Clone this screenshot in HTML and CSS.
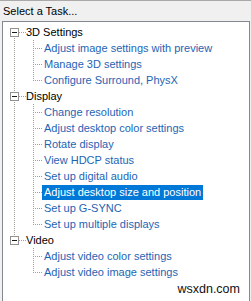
FILE: index.html
```html
<!DOCTYPE html>
<html lang="en">
<head>
    <meta charset="UTF-8">
    <title>Select a Task</title>
    <link rel="stylesheet" href="styles.css">
</head>
<body>
    <div class="title">Select a Task...</div>
    <div class="panel">
        <ul class="tree">
            <li class="root">
                <div class="row"><span class="toggle"></span><span class="label">3D Settings</span></div>
                <ul class="children">
                    <li class="child"><span class="label link">Adjust image settings with preview</span></li>
                    <li class="child"><span class="label link">Manage 3D settings</span></li>
                    <li class="child"><span class="label link">Configure Surround, PhysX</span></li>
                </ul>
            </li>
            <li class="root">
                <div class="row"><span class="toggle"></span><span class="label">Display</span></div>
                <ul class="children">
                    <li class="child"><span class="label link">Change resolution</span></li>
                    <li class="child"><span class="label link">Adjust desktop color settings</span></li>
                    <li class="child"><span class="label link">Rotate display</span></li>
                    <li class="child"><span class="label link">View HDCP status</span></li>
                    <li class="child"><span class="label link">Set up digital audio</span></li>
                    <li class="child"><span class="label link selected">Adjust desktop size and position</span></li>
                    <li class="child"><span class="label link">Set up G-SYNC</span></li>
                    <li class="child"><span class="label link">Set up multiple displays</span></li>
                </ul>
            </li>
            <li class="root">
                <div class="row"><span class="toggle"></span><span class="label">Video</span></div>
                <ul class="children">
                    <li class="child"><span class="label link">Adjust video color settings</span></li>
                    <li class="child"><span class="label link">Adjust video image settings</span></li>
                </ul>
            </li>
        </ul>
        <div class="mark">wsxdn.com</div>
    </div>
</body>
</html>
```

FILE: styles.css
```css
body {
    margin: 0;
    background-color: #f0f0f0;
    border-top: 1px solid #a9a9a9;
    font-family: "Liberation Sans", Arial, sans-serif;
    font-size: 11px;
    color: #000;
    overflow: hidden;
}

.title {
    height: 20px;
    line-height: 20px;
    padding-left: 3px;
}

.panel {
    margin-left: 2px;
    width: 246px;
    height: 290px;
    border: 1px solid #828790;
    background-color: #fff;
}

.tree,
.children {
    list-style: none;
    margin: 0;
    padding: 0;
}

.tree {
    padding-top: 2px;
}

/* dotted connector lines */
.root {
    background: repeating-linear-gradient(to bottom, #a0a0a0 0 1px, transparent 1px 2px) 11px 0 / 1px 100% no-repeat;
}

.root:first-child {
    background-position: 11px 8px;
}

.root:last-child {
    background-size: 1px 8px;
}

.row {
    height: 16px;
    display: flex;
    align-items: center;
    background: repeating-linear-gradient(to right, #a0a0a0 0 1px, transparent 1px 2px) 16px 8px / 7px 1px no-repeat;
}

.toggle {
    align-self: flex-start;
    width: 9px;
    height: 9px;
    box-sizing: border-box;
    margin: 4px 5px 0 7px;
    border: 1px solid #919191;
    background: linear-gradient(#1a1a1a, #1a1a1a) center / 5px 1px no-repeat, #fff;
}

.child {
    height: 16px;
    display: flex;
    align-items: center;
    padding-left: 39px;
    background:
        repeating-linear-gradient(to right, #a0a0a0 0 1px, transparent 1px 2px) 30px 8px / 9px 1px no-repeat,
        repeating-linear-gradient(to bottom, #a0a0a0 0 1px, transparent 1px 2px) 30px 0 / 1px 100% no-repeat;
}

.child:last-child {
    background-size: 9px 1px, 1px 9px;
}

.label {
    padding: 0 2px;
    line-height: 15px;
    white-space: nowrap;
}

.link {
    color: #1e64b4;
}

.selected {
    background-color: #0078d7;
    color: #fff;
}

.mark {
    margin-top: 2px;
    padding-right: 9px;
    text-align: right;
    font-size: 12.5px;
    line-height: 14px;
    color: #111;
}
```
